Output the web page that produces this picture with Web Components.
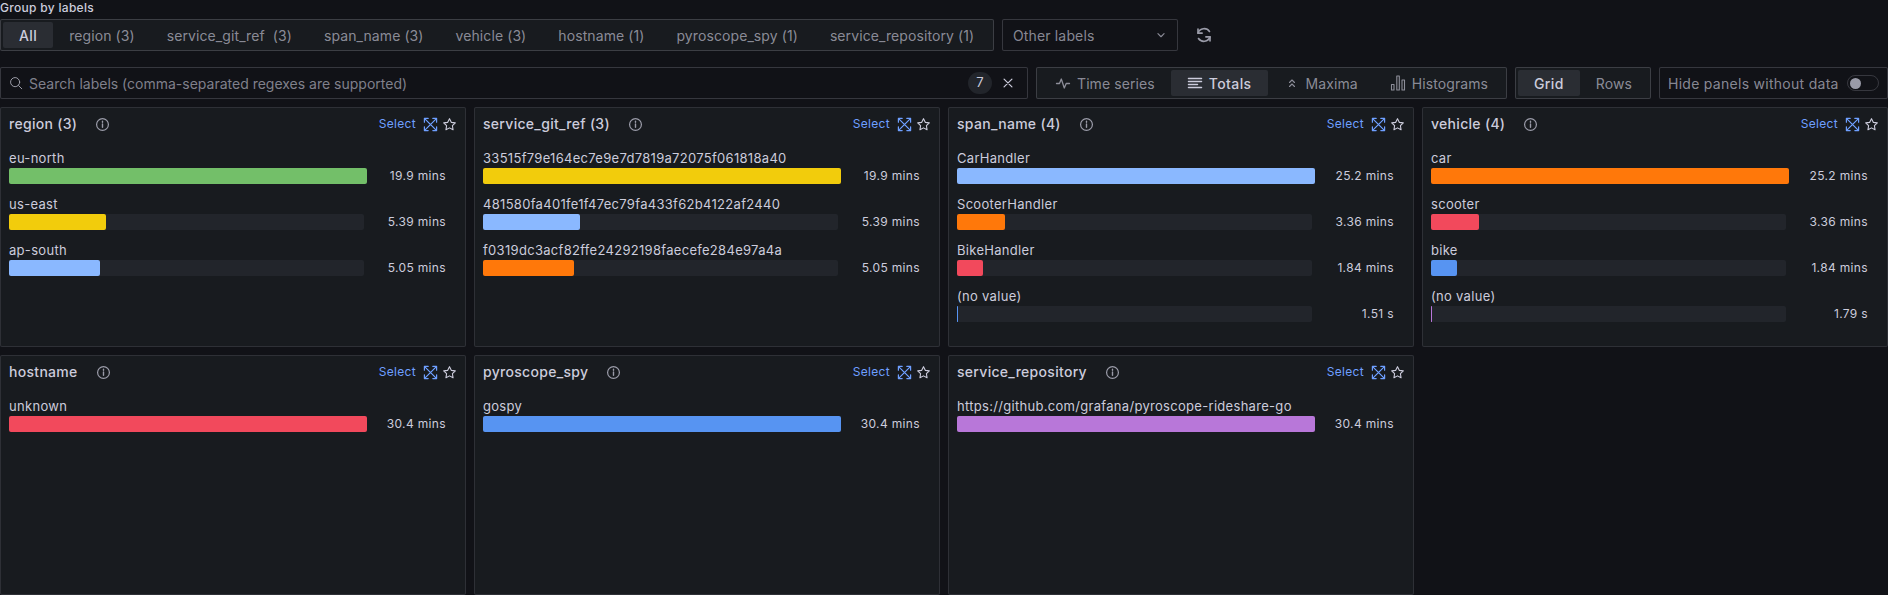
<!DOCTYPE html>
<html><head><meta charset="utf-8">
<style>
html,body{margin:0;padding:0;background:#111217;height:595px;overflow:hidden}
body{font:400 14px/1.5 Inter,"Noto Sans",sans-serif;color:#ccccdc;letter-spacing:.15px}
</style></head><body>
<explore-app>
  <tool-row slot="a">
    <seg-group style="width:994px">
      <seg-item active>All</seg-item><seg-item>region (3)</seg-item><seg-item>service_git_ref&nbsp; (3)</seg-item><seg-item>span_name (3)</seg-item><seg-item>vehicle (3)</seg-item><seg-item>hostname (1)</seg-item><seg-item>pyroscope_spy (1)</seg-item><seg-item>service_repository (1)</seg-item>
    </seg-group>
    <other-select>Other labels</other-select>
    <svg-icon name="sync" size="20" style="margin-left:8px;color:#9a9ba8"></svg-icon>
  </tool-row>
  <tool-row slot="b">
    <search-box placeholder="Search labels (comma-separated regexes are supported)" count="7"></search-box>
    <seg-group style="width:471px">
      <seg-item icon="wave">Time series</seg-item><seg-item icon="lines" active>Totals</seg-item><seg-item icon="dup">Maxima</seg-item><seg-item icon="hist">Histograms</seg-item>
    </seg-group>
    <seg-group style="width:136px">
      <seg-item active>Grid</seg-item><seg-item>Rows</seg-item>
    </seg-group>
    <hide-toggle>Hide panels without data</hide-toggle>
  </tool-row>
  <panel-grid>
    <label-panel heading="region (3)">
      <bar-row label="eu-north" value="19.9 mins" color="#73BF69" fill="358"></bar-row>
      <bar-row label="us-east" value="5.39 mins" color="#F2CC0C" fill="97"></bar-row>
      <bar-row label="ap-south" value="5.05 mins" color="#8AB8FF" fill="91"></bar-row>
    </label-panel>
    <label-panel heading="service_git_ref (3)">
      <bar-row label="33515f79e164ec7e9e7d7819a72075f061818a40" value="19.9 mins" color="#F2CC0C" fill="358"></bar-row>
      <bar-row label="481580fa401fe1f47ec79fa433f62b4122af2440" value="5.39 mins" color="#8AB8FF" fill="97"></bar-row>
      <bar-row label="f0319dc3acf82ffe24292198faecefe284e97a4a" value="5.05 mins" color="#FF780A" fill="91"></bar-row>
    </label-panel>
    <label-panel heading="span_name (4)">
      <bar-row label="CarHandler" value="25.2 mins" color="#8AB8FF" fill="358"></bar-row>
      <bar-row label="ScooterHandler" value="3.36 mins" color="#FF780A" fill="48"></bar-row>
      <bar-row label="BikeHandler" value="1.84 mins" color="#F2495C" fill="26"></bar-row>
      <bar-row label="(no value)" value="1.51 s" color="#5794F2" fill="1"></bar-row>
    </label-panel>
    <label-panel heading="vehicle (4)">
      <bar-row label="car" value="25.2 mins" color="#FF780A" fill="358"></bar-row>
      <bar-row label="scooter" value="3.36 mins" color="#F2495C" fill="48"></bar-row>
      <bar-row label="bike" value="1.84 mins" color="#5794F2" fill="26"></bar-row>
      <bar-row label="(no value)" value="1.79 s" color="#B877D9" fill="1"></bar-row>
    </label-panel>
    <label-panel heading="hostname">
      <bar-row label="unknown" value="30.4 mins" color="#F2495C" fill="358"></bar-row>
    </label-panel>
    <label-panel heading="pyroscope_spy">
      <bar-row label="gospy" value="30.4 mins" color="#5794F2" fill="358"></bar-row>
    </label-panel>
    <label-panel heading="service_repository">
      <bar-row label="https://github.com/grafana/pyroscope-rideshare-go" value="30.4 mins" color="#B877D9" fill="358"></bar-row>
    </label-panel>
  </panel-grid>
</explore-app>
<script>
const ICONS={
 search:'<circle cx="7" cy="7" r="5.2"/><path d="M11 11l3.6 3.6"/>',
 x:'<path d="M3.5 3.5l9 9M12.500 3.500l-9 9" stroke-width="1.400"/>',
 chev:'<path d="M4.500 6.500L8 10l3.500-3.500" stroke-width="1.300"/>',
 sync:'<path d="M3.600 10.800A5.200 5.200 0 0 0 12.800 9.500M12.400 5.200A5.200 5.200 0 0 0 3.200 6.500" stroke-width="1.300"/><path d="M3.200 3.200v3.300h3.300M12.800 12.800V9.500H9.500" stroke-width="1.300"/>',
 wave:'<path d="M1.500 8.500h3l1.800-4.500 3 9 1.900-4.500h3.300" stroke-width="1.300"/>',
 lines:'<path d="M1.500 3.500h13M1.500 6.500h13M1.500 9.500h9M1.500 12.500h13" stroke-width="1.500"/>',
 dup:'<path d="M5.500 7.500L8 5l2.500 2.500M5.500 11.500L8 9l2.500 2.500"/>',
 hist:'<path d="M1.500 9.500h2.500V15H1.500zM6.800 1h2.500v14H6.800zM12 5h2.500v10H12z"/>',
 info:'<circle cx="8" cy="8" r="6.300" stroke-width="1.300"/><path d="M8 7.500v3.500M8 4.600v1" stroke-width="1.500"/>',
 expand:'<path d="M2.500 2.500l11 11M13.500 2.500l-11 11" stroke-width="1.300"/><path d="M1.500 5.500v-4h4M10.500 1.500h4v4M14.500 10.500v4h-4M5.500 14.500h-4v-4" stroke-width="1.300"/>',
 star:'<path d="M8 1.800l1.900 3.900 4.300.6-3.100 3 .7 4.300L8 11.600l-3.800 2 .7-4.300-3.100-3 4.300-.6z" stroke-width="1.200"/>'
};
function def(name,css,html){
  customElements.define(name,class extends HTMLElement{
    constructor(){super();this.attachShadow({mode:'open'})}
    connectedCallback(){
      this.shadowRoot.innerHTML='<style>'+css+'</style>'+(typeof html==='function'?html(this):html);
    }
  });
}
function esc(s){return String(s||'').replace(/&/g,'&amp;').replace(/</g,'&lt;')}
function ic(n,s,st){return '<svg-icon name="'+n+'" size="'+s+'"'+(st?' style="'+st+'"':'')+'></svg-icon>'}

def('svg-icon',':host{display:inline-flex;flex:none}svg{display:block}',
 h=>{const s=h.getAttribute('size')||16;return '<svg width="'+s+'" height="'+s+'" viewBox="0 0 16 16" fill="none" stroke="currentColor" stroke-width="1.100" stroke-linecap="round" stroke-linejoin="round">'+ICONS[h.getAttribute('name')]+'</svg>'});

def('explore-app',`:host{display:flex;flex-direction:column;width:1888px;height:595px}
 .t{font-size:12px;font-weight:500;line-height:15px;height:19px;letter-spacing:.3px}
 .r1{margin-bottom:16px}.r2{margin-bottom:8px}`,
 `<div class="t">Group by labels</div><div class="r1"><slot name="a"></slot></div><div class="r2"><slot name="b"></slot></div><slot></slot>`);

def('tool-row',':host{display:flex;align-items:center;gap:8px;height:32px}','<slot></slot>');

def('seg-group',`:host{display:flex;box-sizing:border-box;height:32px;align-items:center;padding:0 2px;border:1px solid rgba(204,204,220,.2);border-radius:2px;background:#181b1f;flex:none}`,'<slot></slot>');

def('seg-item',`:host{display:flex;align-items:center;gap:6px;height:26px;padding:0 16px;border-radius:2px;color:rgba(204,204,220,.65);white-space:nowrap;font-size:14px;letter-spacing:.09px}
 :host([active]){background:#2a2d33;color:#ccccdc;font-weight:500;letter-spacing:.4px}`,
 h=>{const i=h.getAttribute('icon');return (i?ic(i,16):'')+'<slot></slot>'});

def('other-select',`:host{display:flex;align-items:center;justify-content:space-between;box-sizing:border-box;width:176px;height:32px;padding:0 9px 0 10px;border:1px solid rgba(204,204,220,.2);border-radius:2px;color:rgba(204,204,220,.65);background:#111217;flex:none}`,
 ()=>'<slot></slot>'+ic('chev',14));

def('search-box',`:host{display:flex;align-items:center;box-sizing:border-box;width:1028px;height:32px;padding:0 12px 0 8px;border:1px solid rgba(204,204,220,.2);border-radius:2px;background:#111217;flex:none}
 .p{flex:1;margin-left:6px;color:rgba(204,204,220,.6);letter-spacing:0}
 .c{display:flex;align-items:center;justify-content:center;width:24px;height:22px;border-radius:11px;background:#22252b;color:#ccccdc;font-size:13px;margin-right:9px}`,
 h=>ic('search',14,'color:#a0a1ad')+'<span class="p">'+esc(h.getAttribute('placeholder'))+'</span><span class="c">'+esc(h.getAttribute('count'))+'</span>'+ic('x',14));

def('hide-toggle',`:host{display:flex;align-items:center;box-sizing:border-box;flex:1;height:32px;padding:0 8px;border:1px solid rgba(204,204,220,.2);border-radius:2px;color:rgba(204,204,220,.65);background:#111217;letter-spacing:.28px}
 .lab{flex:1;white-space:nowrap}
 .sw{display:flex;align-items:center;box-sizing:border-box;width:32px;height:16px;padding:0 2px;border:1px solid rgba(204,204,220,.2);border-radius:8px}
 .k{width:11px;height:11px;border-radius:50%;background:#9a9ba8}`,
 `<span class="lab"><slot></slot></span><span class="sw"><span class="k"></span></span>`);

def('panel-grid',`:host{display:grid;grid-template-columns:repeat(4,466px);grid-auto-rows:240px;gap:8px;height:488px}`,'<slot></slot>');

def('label-panel',`:host{display:block;box-sizing:border-box;background:#181b1f;border:1px solid rgba(204,204,220,.12);border-radius:2px;overflow:hidden}
 header{display:flex;align-items:center;height:32px;padding:0 8px 0 8px}
 h2{margin:0;font-size:14px;font-weight:500;line-height:20px;letter-spacing:.3px}
 .s{margin-left:auto;color:#6e9fff;font-size:12px;margin-right:7px;letter-spacing:.3px}
 .body{padding:10px 0 0 8px}`,
 h=>'<header><h2>'+esc(h.getAttribute('heading'))+'</h2>'+ic('info',15,'margin-left:18px;color:#9a9ba8')+'<span class="s">Select</span>'+ic('expand',15,'color:#6e9fff;margin-right:4px')+ic('star',15)+'</header><div class="body"><slot></slot></div>');

def('bar-row',`:host{display:grid;grid-template-columns:355px 82px;grid-template-rows:18px 16px;margin-bottom:12px}
 .l{grid-column:1/3;font-size:13px;line-height:16px;letter-spacing:.3px;white-space:nowrap}
 .t{background:#22252b;border-radius:2px;height:16px}
 .f{height:16px;border-radius:2px}
 .v{text-align:right;font-size:12px;line-height:16px;letter-spacing:.35px;color:#ccccdc}`,
 h=>'<div class="l">'+esc(h.getAttribute('label'))+'</div><div class="t"><div class="f" style="width:'+h.getAttribute('fill')+'px;background:'+h.getAttribute('color')+'"></div></div><div class="v">'+esc(h.getAttribute('value'))+'</div>');
</script>
</body></html>
